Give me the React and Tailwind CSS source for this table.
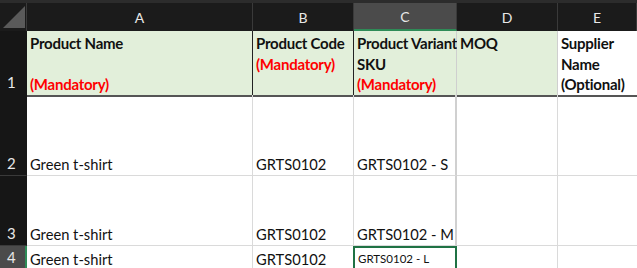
import React from "react";

const font = { fontFamily: "Lato, 'Open Sans', sans-serif" };
const cols = "grid grid-cols-[27px_226px_101px_103px_101px_1fr]";
const head = "pl-[3px] pt-[2px] text-[15px] font-bold leading-[20.5px] text-[#111] flex flex-col whitespace-nowrap tracking-[-0.25px] border-b-2 border-b-[#555]";

function Hdr({ children, sel }) {
  return (
    <div
      className={
        "flex items-center justify-center border-r border-[#3a3a3a] text-[14px] text-[#e8e8e8] " +
        (sel ? "bg-[#4b4b4b] border-b-2 border-b-[#2e8b57]" : "bg-[#1b1b1b]")
      }
    >
      {children}
    </div>
  );
}

function RowNum({ n, sel, cls = "" }) {
  return (
    <div
      className={
        "flex items-end pl-[7px] pb-[1px] text-[15px] text-[#e8e8e8] border-b border-[#3a3a3a] " +
        (sel ? "bg-[#4b4b4b] border-r-2 border-r-[#2e8b57]" : "bg-[#161616] border-r border-r-[#161616]") +
        " " +
        cls
      }
    >
      {n}
    </div>
  );
}

function Cell({ children, cls = "" }) {
  return (
    <div className={"flex items-end pl-[3px] text-[14.7px] text-[#111] border-r border-b border-[#dadada] leading-[20px] whitespace-nowrap " + cls}>
      <span className="pb-[1px]">{children}</span>
    </div>
  );
}

export default function App() {
  return (
    <div className="w-[637px] h-[268px] overflow-hidden bg-white" style={font}>
      {/* column header */}
      <div className={cols + " h-[31px] border-t-[3px] border-[#2c2c2c] bg-[#1b1b1b]"}>
        <div className="relative bg-[#1b1b1b] border-r border-[#3a3a3a]">
          <svg className="absolute left-[3px] top-[3px]" width="22" height="22" viewBox="0 0 22 22">
            <polygon points="22,0 22,22 0,22" fill="#5a5a5a" />
          </svg>
        </div>
        <Hdr>A</Hdr>
        <Hdr>B</Hdr>
        <Hdr sel>C</Hdr>
        <Hdr>D</Hdr>
        <Hdr>E</Hdr>
      </div>

      {/* row 1 */}
      <div className={cols + " h-[64px]"}>
        <RowNum n="1" cls="border-b-2 border-b-[#555]" />
        <div className={"bg-[#e2efda] border-r border-r-[#222] " + head}>
          <span>Product Name</span>
          <span>&nbsp;</span>
          <span className="text-[#ff0000]">(Mandatory)</span>
        </div>
        <div className={"bg-[#e2efda] border-r border-r-[#222] " + head}>
          <span>Product Code</span>
          <span className="text-[#ff0000]">(Mandatory)</span>
        </div>
        <div className={"bg-[#e2efda] border-r border-r-[#cfcfcf] " + head}>
          <span>Product Variant</span>
          <span>SKU</span>
          <span className="text-[#ff0000]">(Mandatory)</span>
        </div>
        <div className={"bg-[#e2efda] border-r border-r-[#cfcfcf] " + head}>
          <span>MOQ</span>
        </div>
        <div className={"bg-white " + head}>
          <span>Supplier</span>
          <span>Name</span>
          <span>(Optional)</span>
        </div>
      </div>

      {/* row 2 */}
      <div className={cols + " h-[81px]"}>
        <RowNum n="2" />
        <Cell>Green t-shirt</Cell>
        <Cell>GRTS0102</Cell>
        <Cell cls="border-r-2 border-r-[#d0d0d0]">GRTS0102 - S</Cell>
        <Cell />
        <Cell cls="border-r-0" />
      </div>

      {/* row 3 */}
      <div className={cols + " h-[70px]"}>
        <RowNum n="3" />
        <Cell>Green t-shirt</Cell>
        <Cell>GRTS0102</Cell>
        <Cell cls="border-r-2 border-r-[#d0d0d0]">GRTS0102 - M</Cell>
        <Cell />
        <Cell cls="border-r-0" />
      </div>

      {/* row 4 */}
      <div className={cols + " h-[24px]"}>
        <RowNum n="4" sel />
        <Cell>Green t-shirt</Cell>
        <Cell>GRTS0102</Cell>
        <div className="relative flex items-end pl-[3px] text-[11.5px] text-[#111] border-2 border-[#1f7244] ml-[-1px] whitespace-nowrap">
          <span className="pb-[1px]">GRTS0102 - L</span>
        </div>
        <Cell />
        <Cell cls="border-r-0" />
      </div>
    </div>
  );
}
